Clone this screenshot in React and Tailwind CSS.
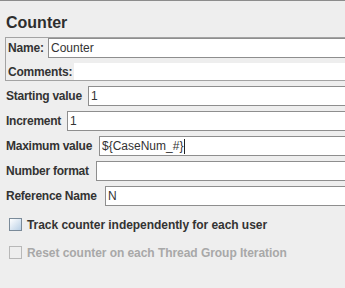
export default function App() {
  const rows = [
    { label: "Starting value", w: "w-[88px]", value: "1" },
    { label: "Increment", w: "w-[67px]", value: "1" },
    { label: "Maximum value", w: "w-[99px]", value: "${CaseNum_#}", caret: true },
    { label: "Number format", w: "w-[96px]", value: "" },
    { label: "Reference Name", w: "w-[105px]", value: "N" },
  ];
  return (
    <div
      className="relative w-[345px] h-[288px] overflow-hidden bg-[#eeeeee] text-[#333333]"
      style={{ fontFamily: '"Liberation Sans", Arial, sans-serif' }}
    >
      <div className="h-px bg-[#8c8c8c]" />
      <div className="pl-[6px] pt-[12px] h-[36px] text-[16px] leading-[19px] font-bold text-[#2e2e2e]">
        Counter
      </div>
      {/* Name / Comments panel */}
      <div className="ml-[5px] w-[400px] border border-[#a3a3a3] border-r-0">
        <div className="flex items-stretch h-[20px]">
          <div className="w-[42px] pl-[2px] flex items-center text-[12px] font-bold tracking-[-0.2px]">
            Name:
          </div>
          <div className="flex-1 bg-white border border-[#8e8e8e] border-r-0 flex items-center pl-[2px] text-[12px]">
            Counter
          </div>
        </div>
        <div className="flex h-[22px] pt-[5px]">
          <div className="w-[68px] pl-[2px] flex items-center text-[12px] font-bold tracking-[-0.2px]">
            Comments:
          </div>
          <div className="flex-1 bg-white" />
        </div>
      </div>
      {/* Fields */}
      <div className="mt-[5px] flex flex-col gap-[5px] w-[420px]">
        {rows.map((r) => (
          <div key={r.label} className="flex h-[20px]">
            <div
              className={`${r.w} shrink-0 pl-[6px] flex items-center text-[12px] font-bold tracking-[-0.25px] whitespace-nowrap`}
            >
              {r.label}
            </div>
            <div className="flex-1 bg-white border border-[#8e8e8e] border-r-0 flex items-center pl-[2px] text-[12px] text-[#333333]">
              <span>{r.value}</span>
              {r.caret && <span className="ml-[1px] w-px h-[15px] bg-[#222222]" />}
            </div>
          </div>
        ))}
      </div>
      {/* Checkboxes */}
      <div className="mt-[12px] flex flex-col gap-[15px] pl-[9px]">
        <div className="flex items-center gap-[5px] h-[13px]">
          <div className="w-[13px] h-[13px] border border-[#7a8a99] bg-gradient-to-br from-white to-[#b8cfe5]" />
          <span className="text-[12px] font-bold text-[#333333] tracking-[-0.05px]">
            Track counter independently for each user
          </span>
        </div>
        <div className="flex items-center gap-[5px] h-[13px]">
          <div className="w-[13px] h-[13px] border border-[#b8b8b8]" />
          <span className="text-[12px] font-bold text-[#a8a8a8] tracking-[-0.05px]">
            Reset counter on each Thread Group Iteration
          </span>
        </div>
      </div>
    </div>
  );
}
